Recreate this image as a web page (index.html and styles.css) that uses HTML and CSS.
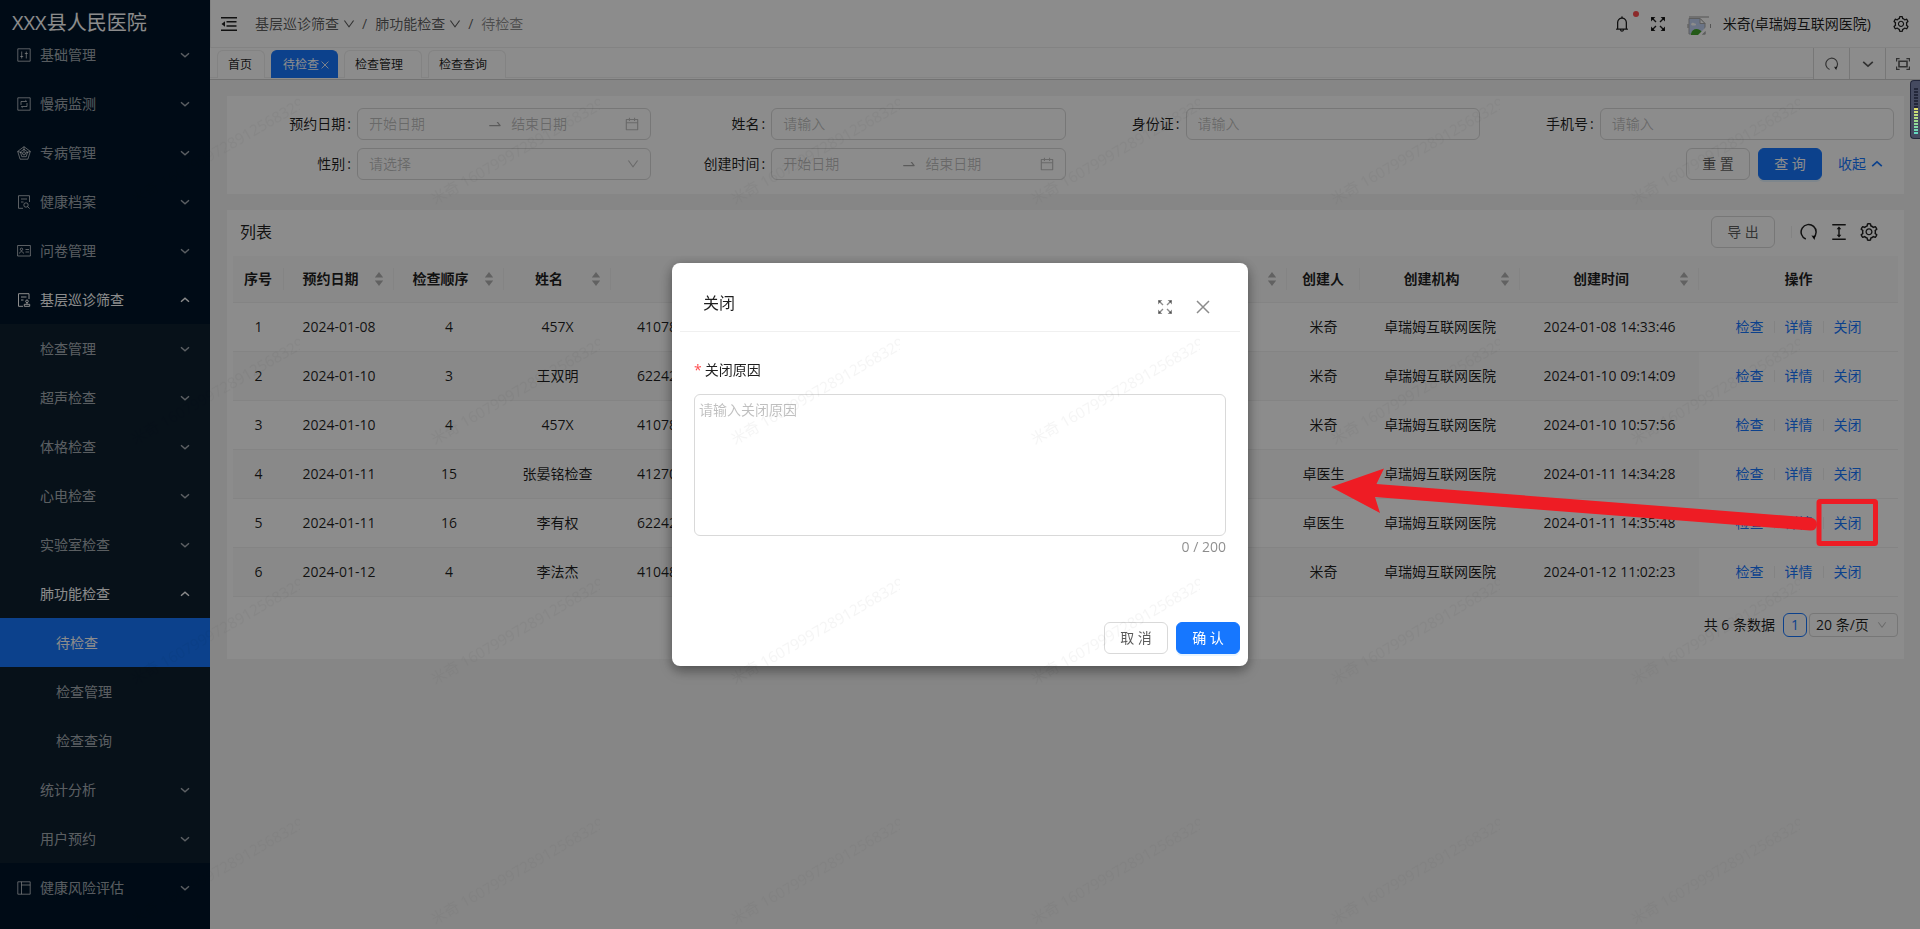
FILE: index.html
```html
<!DOCTYPE html>
<html lang="zh-CN">
<head>
<meta charset="utf-8">
<title>待检查</title>
<link rel="stylesheet" href="styles.css">
</head>
<body>
<svg class="sprite" aria-hidden="true">
  <symbol id="down" viewBox="64 64 896 896"><path d="M884 256h-75c-5.100 0-9.900 2.500-12.900 6.600L512 654.200 227.900 262.600c-3-4.100-7.800-6.600-12.900-6.600h-75c-6.500 0-10.300 7.400-6.500 12.700l352.600 486.100c12.800 17.600 39 17.600 51.700 0l352.600-486.100c3.900-5.300.1-12.700-6.400-12.700z"/></symbol>
  <symbol id="chev" viewBox="0 0 10 10"><path d="M1 3.200l4 3.600 4-3.600" fill="none" stroke="currentColor" stroke-width="1.400"/></symbol>
  <symbol id="cal" viewBox="64 64 896 896"><path d="M880 184H712v-64c0-4.400-3.600-8-8-8h-56c-4.400 0-8 3.600-8 8v64H384v-64c0-4.400-3.600-8-8-8h-56c-4.400 0-8 3.600-8 8v64H144c-17.700 0-32 14.300-32 32v664c0 17.700 14.300 32 32 32h736c17.700 0 32-14.300 32-32V216c0-17.700-14.300-32-32-32zm-40 656H184V460h656v380zM184 392V256h128v48c0 4.400 3.600 8 8 8h56c4.400 0 8-3.600 8-8v-48h256v48c0 4.400 3.600 8 8 8h56c4.400 0 8-3.600 8-8v-48h128v136H184z"/></symbol>
  <symbol id="to" viewBox="0 0 1024 1024"><path d="M873.100 596.200l-164-208A32 32 0 00684 376h-64.800c-6.700 0-10.400 7.700-6.300 13l144.300 183H152c-4.400 0-8 3.600-8 8v60c0 4.400 3.600 8 8 8h695.900c26.800 0 41.700-30.800 25.200-51.800z"/></symbol>
  <symbol id="bell" viewBox="64 64 896 896"><path d="M816 768h-24V428c0-141.100-104.300-257.800-240-277.200V112c0-22.100-17.900-40-40-40s-40 17.900-40 40v38.800C336.300 170.200 232 286.900 232 428v340h-24c-17.700 0-32 14.300-32 32v32c0 4.400 3.600 8 8 8h216c0 61.800 50.200 112 112 112s112-50.200 112-112h216c4.400 0 8-3.600 8-8v-32c0-17.700-14.300-32-32-32zM512 888c-26.500 0-48-21.500-48-48h96c0 26.500-21.500 48-48 48zM304 768V428c0-55.600 21.600-107.800 60.900-147.100S456.400 220 512 220c55.600 0 107.800 21.600 147.100 60.900S720 372.400 720 428v340H304z"/></symbol>
  <symbol id="gear" viewBox="64 64 896 896"><path d="M924.800 625.700l-65.500-56c3.100-19 4.700-38.400 4.700-57.800s-1.600-38.800-4.700-57.800l65.500-56a32.030 32.030 0 009.300-35.200l-.9-2.600a443.740 443.740 0 00-79.700-137.900l-1.800-2.100a32.120 32.120 0 00-35.100-9.500l-81.300 28.900c-30-24.600-63.500-44-99.700-57.600l-15.700-85a32.050 32.050 0 00-25.800-25.700l-2.700-.5c-52.100-9.400-106.900-9.400-159 0l-2.700.5a32.050 32.050 0 00-25.800 25.700l-15.800 85.400a351.860 351.860 0 00-99 57.400l-81.900-29.100a32 32 0 00-35.100 9.500l-1.800 2.100a446.020 446.020 0 00-79.700 137.900l-.9 2.600c-4.500 12.500-.8 26.500 9.300 35.200l66.300 56.600c-3.100 18.800-4.600 38-4.600 57.100 0 19.200 1.500 38.400 4.600 57.100L99 625.500a32.030 32.030 0 00-9.300 35.200l.9 2.600c18.100 50.400 44.900 96.900 79.700 137.900l1.800 2.100a32.120 32.120 0 0035.100 9.500l81.900-29.100c29.800 24.500 63.100 43.900 99 57.400l15.800 85.400a32.050 32.050 0 0025.800 25.700l2.700.5a449.400 449.400 0 00159 0l2.700-.5a32.050 32.050 0 0025.800-25.700l15.700-85a350 350 0 0099.700-57.600l81.300 28.900a32 32 0 0035.100-9.500l1.800-2.100c34.800-41.100 61.600-87.500 79.700-137.900l.9-2.600c4.500-12.300.8-26.300-9.300-35zM788.300 465.900c2.500 15.100 3.800 30.600 3.800 46.100s-1.300 31-3.800 46.100l-6.600 40.100 74.700 63.900a370.030 370.030 0 01-42.600 73.600L721 702.800l-31.400 25.800c-23.900 19.600-50.500 35-79.300 45.800l-38.100 14.300-17.900 97a377.500 377.500 0 01-85 0l-17.900-97.200-37.800-14.500c-28.500-10.800-55-26.200-78.700-45.700l-31.400-25.900-93.400 33.200c-17-22.900-31.200-47.600-42.600-73.600l75.500-64.500-6.500-40c-2.400-14.900-3.700-30.300-3.700-45.500 0-15.300 1.200-30.600 3.700-45.500l6.500-40-75.500-64.500c11.300-26.100 25.600-50.700 42.600-73.600l93.400 33.200 31.400-25.900c23.700-19.500 50.200-34.900 78.700-45.700l37.900-14.300 17.900-97.200c28.100-3.200 56.800-3.200 85 0l17.900 97 38.100 14.300c28.700 10.800 55.400 26.200 79.300 45.800l31.400 25.800 92.800-32.900c17 22.900 31.200 47.600 42.600 73.600L781.800 426l6.500 39.900zM512 326c-97.200 0-176 78.800-176 176s78.800 176 176 176 176-78.800 176-176-78.800-176-176-176zm79.200 255.200A111.600 111.600 0 01512 614c-29.900 0-58-11.700-79.200-32.800A111.600 111.600 0 01400 502c0-29.900 11.700-58 32.800-79.200C454 401.600 482.100 390 512 390c29.900 0 58 11.600 79.200 32.800A111.600 111.600 0 01624 502c0 29.900-11.700 58-32.800 79.200z"/></symbol>
  <symbol id="height" viewBox="64 64 896 896"><path d="M840 836H184c-4.400 0-8 3.600-8 8v60c0 4.400 3.600 8 8 8h656c4.400 0 8-3.600 8-8v-60c0-4.400-3.600-8-8-8zm0-724H184c-4.400 0-8 3.600-8 8v60c0 4.400 3.600 8 8 8h656c4.400 0 8-3.600 8-8v-60c0-4.400-3.600-8-8-8zM610.800 378c6 0 9.400-7 5.700-11.700L515.700 238.700a7.140 7.140 0 00-11.300 0L403.600 366.300a7.230 7.230 0 005.700 11.700H476v268h-62.800c-6 0-9.400 7-5.700 11.700l100.800 127.500c2.900 3.700 8.500 3.700 11.300 0l100.800-127.500c3.700-4.700.4-11.700-5.700-11.700H548V378h62.800z"/></symbol>
  <symbol id="redo" viewBox="0 0 18 18"><path d="M5.800 16A7.500 7.500 0 1 1 13.300 14.900" fill="none" stroke="currentColor" stroke-width="1.500"/><path d="M11.400 12.600l4 .3-.8 4.200z"/></symbol>
  <symbol id="full" viewBox="0 0 14 14"><g fill="none" stroke="currentColor" stroke-width="1.400"><path d="M1 1l4 4M13 1L9 5M1 13l4-4M13 13L9 9"/></g><path d="M0 0h4.400L0 4.400zM14 0v4.400L9.600 0zM0 14V9.600L4.400 14zM14 14H9.600L14 9.600z"/></symbol>
  <symbol id="fold" viewBox="0 0 16 14"><path d="M0 0h16v1.500H0zM5.500 4h10v1.500h-10zM5.500 8.300h10v1.500h-10zM0 12.500h16V14H0zM.5 7L4 4.300v5.400z"/></symbol>
  <symbol id="screen" viewBox="0 0 14 12"><g fill="none" stroke="currentColor" stroke-width="1.200"><path d="M.6 3.500V.6h3M10.400.6h3v2.900M13.400 8.500v2.900h-3M3.600 11.400h-3V8.500"/><path d="M3 3.300h8v5.400H3z" stroke-width="1.600"/></g></symbol>
  <symbol id="x" viewBox="0 0 14 14"><path d="M1 1l12 12M13 1L1 13" fill="none" stroke="currentColor" stroke-width="1.500"/></symbol>
  <symbol id="sort" viewBox="0 0 12 14"><path d="M6 0l4.200 5.500H1.800zM6 14l4.200-5.500H1.800z"/></symbol>
  <symbol id="m1" viewBox="0 0 14 14"><g class="line"><path d="M.8.800h12.400v12.400H.8zM4.700 3.500v7M9.300 3.500v7M3.200 8.500h3M7.800 5.500h3"/></g></symbol>
  <symbol id="m2" viewBox="0 0 14 14"><g class="line"><path d="M.8.800h12.400v12.400H.8zM4 8V4.500h5.500M10 6v3.500H4.500M8.300 3.200l1.500 1.300M5.700 10.800L4.200 9.500"/></g></symbol>
  <symbol id="m3" viewBox="0 0 14 14"><g class="line"><path d="M7 .7l6.300 4.700-2.400 7.800H3.100L.7 5.400zM7 3.200l3.600 2.800-1.400 4.700H4.800L3.400 6zM7 5.800l1.500 1.100-.6 1.900H6.100l-.6-1.900zM7 .7v5M.7 5.400L5.500 7M13.300 5.400L8.500 7"/></g></symbol>
  <symbol id="m4" viewBox="0 0 14 14"><g class="line"><path d="M6 13.300H1.500V.7h11V7M4 4h6M4 7h2.500"/><circle cx="9" cy="10" r="2.200"/><path d="M10.600 11.600l2 2"/></g></symbol>
  <symbol id="m5" viewBox="0 0 14 14"><g class="line"><path d="M.6 1.500h12.800v10.500H.6zM8.500 5.500H12M8.500 8H12M2.500 9.500c.3-2.500 3.700-2.500 4 0"/><circle cx="4.500" cy="5.300" r="1.200"/></g></symbol>
  <symbol id="m6" viewBox="0 0 14 14"><g class="line"><path d="M6 13.300H1.500V.7h10.500V6M4 4h5.500M4 7h2.500M7.300 13.300v-2h5.400v2zM10 11v-1.500"/><circle cx="10" cy="8.300" r="1.300"/></g></symbol>
  <symbol id="m7" viewBox="0 0 14 14"><g class="line"><path d="M.8.800h12.400v12.400H.8zM4.500.8v12.400M4.500 4h8.700"/></g></symbol>
</svg>

<div class="app">
  <aside class="side">
    <div class="logo">XXX县人民医院</div>
    <nav class="menu">
      <a href="#" class="item"><svg class="mi"><use href="#m1"/></svg><span>基础管理</span><svg class="arr"><use href="#chev"/></svg></a>
      <a href="#" class="item"><svg class="mi"><use href="#m2"/></svg><span>慢病监测</span><svg class="arr"><use href="#chev"/></svg></a>
      <a href="#" class="item"><svg class="mi"><use href="#m3"/></svg><span>专病管理</span><svg class="arr"><use href="#chev"/></svg></a>
      <a href="#" class="item"><svg class="mi"><use href="#m4"/></svg><span>健康档案</span><svg class="arr"><use href="#chev"/></svg></a>
      <a href="#" class="item"><svg class="mi"><use href="#m5"/></svg><span>问卷管理</span><svg class="arr"><use href="#chev"/></svg></a>
      <a href="#" class="item open"><svg class="mi"><use href="#m6"/></svg><span>基层巡诊筛查</span><svg class="arr"><use href="#chev"/></svg></a>
      <div class="sub">
        <a href="#" class="item"><span>检查管理</span><svg class="arr"><use href="#chev"/></svg></a>
        <a href="#" class="item"><span>超声检查</span><svg class="arr"><use href="#chev"/></svg></a>
        <a href="#" class="item"><span>体格检查</span><svg class="arr"><use href="#chev"/></svg></a>
        <a href="#" class="item"><span>心电检查</span><svg class="arr"><use href="#chev"/></svg></a>
        <a href="#" class="item"><span>实验室检查</span><svg class="arr"><use href="#chev"/></svg></a>
        <a href="#" class="item open"><span>肺功能检查</span><svg class="arr"><use href="#chev"/></svg></a>
        <a href="#" class="item leaf active"><span>待检查</span></a>
        <a href="#" class="item leaf"><span>检查管理</span></a>
        <a href="#" class="item leaf"><span>检查查询</span></a>
        <a href="#" class="item"><span>统计分析</span><svg class="arr"><use href="#chev"/></svg></a>
        <a href="#" class="item"><span>用户预约</span><svg class="arr"><use href="#chev"/></svg></a>
      </div>
      <a href="#" class="item"><svg class="mi"><use href="#m7"/></svg><span>健康风险评估</span><svg class="arr"><use href="#chev"/></svg></a>
    </nav>
  </aside>

  <div class="main">
    <header class="top">
      <svg class="fold"><use href="#fold"/></svg>
      <nav class="crumbs">
        <a href="#">基层巡诊筛查<svg class="i12"><use href="#down"/></svg></a><span class="slash">/</span>
        <a href="#">肺功能检查<svg class="i12"><use href="#down"/></svg></a><span class="slash">/</span>
        <span class="here">待检查</span>
      </nav>
      <div class="tools">
        <span class="bell"><svg class="i16"><use href="#bell"/></svg><i class="dot"></i></span>
        <svg class="i14"><use href="#full"/></svg>
        <svg class="avatar" viewBox="0 -4 24 24"><path d="M1 12V8M2 1h20M23.500 8v4" fill="none" stroke="#999"/><path d="M2 2.500h11l5 5V18H2z" fill="#c3d3f5" stroke="#aaa"/><path d="M13 2.500v5h5z" fill="#fff" stroke="#aaa"/><path d="M4 8.500c0-2 3-2.500 3.500-1 2-.5 2 2 .5 2H5z" fill="#fff"/><path d="M4 18c1-6 8-7 12-1l-1 2H4z" fill="#43a52c"/><path d="M10 20l9-9v4l-5 5z" fill="#fff"/><path d="M15 18.500h3.500v-3.500z" fill="#aaa"/></svg>
        <span>米奇(卓瑞姆互联网医院)</span>
        <svg class="i16 set"><use href="#gear"/></svg>
      </div>
    </header>

    <div class="tabs">
      <div class="tablist">
        <a href="#" class="tab">首页</a>
        <a href="#" class="tab closable on">待检查<svg class="i8"><use href="#x"/></svg></a>
        <a href="#" class="tab closable">检查管理</a>
        <a href="#" class="tab closable">检查查询</a>
      </div>
      <button class="tb" aria-label="刷新"><svg class="i14"><use href="#redo"/></svg></button>
      <button class="tb" aria-label="更多"><svg class="i12"><use href="#chev"/></svg></button>
      <button class="tb" aria-label="全屏"><svg class="i14"><use href="#screen"/></svg></button>
    </div>

    <main class="content">
      <form class="card search">
        <div class="field"><label for="d1">预约日期<i>:</i></label><div class="box"><input id="d1" placeholder="开始日期"><svg class="i16 to"><use href="#to"/></svg><input aria-label="结束日期" placeholder="结束日期"><svg class="i14 cal"><use href="#cal"/></svg></div></div>
        <div class="field"><label for="nm">姓名<i>:</i></label><div class="box"><input id="nm" placeholder="请输入"></div></div>
        <div class="field"><label for="idn">身份证<i>:</i></label><div class="box"><input id="idn" placeholder="请输入"></div></div>
        <div class="field"><label for="ph">手机号<i>:</i></label><div class="box"><input id="ph" placeholder="请输入"></div></div>
        <div class="field"><label for="sx">性别<i>:</i></label><div class="box"><select id="sx" class="ghost"><option>请选择</option></select><svg class="i12 cal"><use href="#down"/></svg></div></div>
        <div class="field"><label for="d2">创建时间<i>:</i></label><div class="box"><input id="d2" placeholder="开始日期"><svg class="i16 to"><use href="#to"/></svg><input aria-label="结束日期" placeholder="结束日期"><svg class="i14 cal"><use href="#cal"/></svg></div></div>
        <div class="acts"><button type="button" class="btn">重 置</button><button type="button" class="btn pri">查 询</button><a href="#" class="fewer">收起<svg class="i12 up"><use href="#chev"/></svg></a></div>
      </form>

      <section class="card list">
        <div class="bar">
          <h2>列表</h2>
          <button class="btn">导 出</button><i class="vr"></i>
          <svg class="i18"><use href="#redo"/></svg><svg class="i18"><use href="#height"/></svg><svg class="i18"><use href="#gear"/></svg>
        </div>
        <table>
          <colgroup><col class="w51"><col class="w110"><col class="w110"><col class="w107"><col><col class="w73"><col class="w160"><col class="w179"><col class="w199"></colgroup>
          <thead><tr>
            <th><div><span>序号</span></div></th>
            <th><div><span>预约日期</span><svg><use href="#sort"/></svg></div></th>
            <th><div><span>检查顺序</span><svg><use href="#sort"/></svg></div></th>
            <th><div><span>姓名</span><svg><use href="#sort"/></svg></div></th>
            <th><div class="tip"><i></i><svg><use href="#sort"/></svg></div></th>
            <th><div><span>创建人</span></div></th>
            <th><div><span>创建机构</span><svg><use href="#sort"/></svg></div></th>
            <th><div><span>创建时间</span><svg><use href="#sort"/></svg></div></th>
            <th><div><span>操作</span></div></th>
          </tr></thead>
          <tbody>
            <tr><td>1</td><td>2024-01-08</td><td>4</td><td>457X</td><td class="id">41078</td><td>米奇</td><td>卓瑞姆互联网医院</td><td>2024-01-08 14:33:46</td><td class="ops"><a href="#">检查</a><a href="#">详情</a><a href="#">关闭</a></td></tr>
            <tr><td>2</td><td>2024-01-10</td><td>3</td><td>王双明</td><td class="id">62242</td><td>米奇</td><td>卓瑞姆互联网医院</td><td>2024-01-10 09:14:09</td><td class="ops"><a href="#">检查</a><a href="#">详情</a><a href="#">关闭</a></td></tr>
            <tr><td>3</td><td>2024-01-10</td><td>4</td><td>457X</td><td class="id">41078</td><td>米奇</td><td>卓瑞姆互联网医院</td><td>2024-01-10 10:57:56</td><td class="ops"><a href="#">检查</a><a href="#">详情</a><a href="#">关闭</a></td></tr>
            <tr><td>4</td><td>2024-01-11</td><td>15</td><td>张晏铭检查</td><td class="id">41270</td><td>卓医生</td><td>卓瑞姆互联网医院</td><td>2024-01-11 14:34:28</td><td class="ops"><a href="#">检查</a><a href="#">详情</a><a href="#">关闭</a></td></tr>
            <tr><td>5</td><td>2024-01-11</td><td>16</td><td>李有权</td><td class="id">62242</td><td>卓医生</td><td>卓瑞姆互联网医院</td><td>2024-01-11 14:35:48</td><td class="ops"><a href="#">检查</a><a href="#">详情</a><a href="#">关闭</a></td></tr>
            <tr><td>6</td><td>2024-01-12</td><td>4</td><td>李法杰</td><td class="id">41048</td><td>米奇</td><td>卓瑞姆互联网医院</td><td>2024-01-12 11:02:23</td><td class="ops"><a href="#">检查</a><a href="#">详情</a><a href="#">关闭</a></td></tr>
          </tbody>
        </table>
        <div class="pager"><span>共 6 条数据</span><button class="page">1</button><div class="size"><select aria-label="每页条数"><option>20 条/页</option></select><svg class="i10"><use href="#down"/></svg></div></div>
      </section>
    </main>
  </div>
</div>

<div class="mask">
  <div class="modal" role="dialog" aria-labelledby="mt">
    <div class="mhead"><h3 id="mt">关闭</h3><button aria-label="全屏"><svg class="i14"><use href="#full"/></svg></button><button aria-label="关闭"><svg class="i14"><use href="#x"/></svg></button></div>
    <div class="mbody">
      <label for="why"><b>*</b>关闭原因</label>
      <textarea id="why" placeholder="请输入关闭原因"></textarea>
      <div class="count">0 / 200</div>
    </div>
    <div class="mfoot"><button class="btn">取 消</button><button class="btn pri">确 认</button></div>
  </div>
</div>

<svg class="wm" aria-hidden="true">
  <defs><pattern id="wmp" x="0" y="96" width="300" height="240" patternUnits="userSpaceOnUse"><text transform="translate(135 109) rotate(-30)">米奇 1607999728912568329</text></pattern></defs>
  <rect width="100%" height="100%" fill="url(#wmp)"/>
</svg>

<svg class="note" viewBox="0 0 600 100" aria-hidden="true">
  <path d="M11 27L64 8.500 56.500 24 490 57.500Q497 58 497 65 496 71 490 70.500L55 37 60 53z" fill="#ee1c24"/>
  <rect x="499" y="41.500" width="56.500" height="42" rx="1" fill="none" stroke="#ee1c24" stroke-width="5"/>
</svg>
<div class="meter"><i class="off"></i><i class="lit"></i></div>
</body>
</html>
```
FILE: styles.css
```css
* { box-sizing: border-box; }
body { margin: 0; font: 14px/22px "Open Sans", "Noto Sans CJK SC", sans-serif; color: rgba(0,0,0,.88); overflow: hidden; }
a { color: inherit; text-decoration: none; }
svg { fill: currentColor; flex: none; display: block; }
button, input, select, textarea { font: inherit; color: inherit; }
h2, h3 { margin: 0; font-weight: 400; font-size: 16px; line-height: 24px; }
.sprite { position: absolute; width: 0; height: 0; }
.line { fill: none; stroke: currentColor; stroke-width: 1; }
.i8 { width: 8px; height: 8px; }
.i10 { width: 10px; height: 10px; }
.i12 { width: 12px; height: 12px; }
.i14 { width: 14px; height: 14px; }
.i16 { width: 16px; height: 16px; }
.i18 { width: 18px; height: 18px; }

.app { display: flex; height: 100vh; }

.side { width: 210px; flex: none; background: #001529; color: #fff; overflow: hidden; }
.logo { height: 46px; padding-left: 12px; font-size: 20px; line-height: 46px; }
.menu { margin-top: -16px; }
.item { display: flex; align-items: center; height: 49px; padding: 0 20px 0 17px; color: rgba(255,255,255,.65); }
.item span { flex: 1; }
.item .mi { width: 14px; height: 14px; margin-right: 9px; }
.item .arr { width: 10px; height: 10px; }
.item.open { color: #fff; }
.item.open .arr, .up { transform: rotate(180deg); }
.sub { background: #0d1f2f; }
.sub .item { padding-left: 40px; }
.sub .leaf { padding-left: 56px; }
.item.active { background: #1677ff; color: #fff; }

.main { flex: 1; min-width: 0; display: flex; flex-direction: column; background: #f5f5f5; }
.top { display: flex; align-items: center; height: 48px; padding: 0 11px 0 10px; background: #fff; border-bottom: 1px solid #eee; border-left: 1px solid #eee; }
.fold { width: 16px; height: 14px; margin-right: 18px; }
.crumbs { flex: 1; display: flex; align-items: center; color: rgba(0,0,0,.65); }
.crumbs a { display: flex; align-items: center; gap: 4px; }
.slash { margin: 0 8px 0 7px; }
.here { color: rgba(0,0,0,.45); }
.tools { display: flex; align-items: center; }
.bell { position: relative; margin-right: 21px; }
.dot { position: absolute; right: -9px; top: -5px; width: 6px; height: 6px; border-radius: 3px; background: #ff4d4f; }
.avatar { width: 24px; height: 24px; margin: 0 12px 0 22px; }
.set { margin-left: 22px; }

.tabs { display: flex; height: 32px; background: #fff; border-bottom: 1px solid #d0d0d0; }
.tablist { flex: 1; display: flex; gap: 6px; padding: 2px 0 0 7px; height: 30px; border-bottom: 1px solid #f0f0f0; }
.tab { display: flex; align-items: center; height: 28px; padding: 0 12px 0 10px; font-size: 12px; border: 1px solid #eee; border-bottom: 0; border-radius: 6px 6px 0 0; background: #fff; }
.closable { padding-right: 18px; }
.on { padding: 0 8px 0 11px; gap: 2px; background: #1677ff; color: #fff; border-color: #1677ff; }
.tb { width: 36px; display: grid; place-items: center; padding: 0; border: 0; border-left: 1px solid #d9d9d9; background: none; color: rgba(0,0,0,.65); }
.tb:last-child { width: 35px; }

.content { padding: 16px; }
.card { background: #fff; }
.search { display: grid; grid-template-columns: repeat(4, 1fr); row-gap: 8px; padding: 12px 10px 14px; margin-bottom: 16px; margin-left: 1px; }
.field { display: flex; align-items: center; }
.field label { width: 120px; flex: none; text-align: right; }
.field label i { font-style: normal; margin: 0 6px 0 2px; }
.box { flex: 1; min-width: 0; display: flex; align-items: center; height: 32px; padding: 0 11px; border: 1px solid #d9d9d9; border-radius: 6px; }
.box input, .box select { flex: 1; min-width: 0; width: 0; padding: 0; border: 0; outline: 0; background: none; appearance: none; }
::placeholder { color: rgba(0,0,0,.25); opacity: 1; }
.ghost, .box .cal, .box .to { color: rgba(0,0,0,.25); }
.box .to { margin: 0 8px; color: rgba(0,0,0,.35); }
.box .cal { margin-left: 4px; }
.acts { grid-column: 3 / 5; display: flex; justify-content: flex-end; align-items: center; gap: 8px; }
.btn { min-width: 64px; height: 32px; padding: 0 15px; border: 1px solid #d9d9d9; border-radius: 6px; background: #fff; color: rgba(0,0,0,.65); }
.pri { background: #1677ff; border-color: #1677ff; color: #fff; box-shadow: 0 2px 0 rgba(5,145,255,.1); }
.fewer { display: flex; align-items: center; gap: 5px; padding: 0 11px 0 8px; color: #1677ff; }

.list { margin-left: 1px; padding: 6px 6px 22px; }
.bar { display: flex; align-items: center; height: 40px; padding: 0 20px 8px 7px; }
.bar h2 { flex: 1; }
.bar .i18 { margin-left: 12px; }
.vr { width: 1px; height: 12px; margin: 0 -4px 0 16px; background: #eee; }
table { width: 100%; table-layout: fixed; border-collapse: separate; border-spacing: 0; }
.w51 { width: 51px; } .w73 { width: 73px; } .w107 { width: 107px; } .w110 { width: 110px; }
.w160 { width: 160px; } .w179 { width: 179px; } .w199 { width: 199px; }
th, td { padding: 0; text-align: center; border-bottom: 1px solid #f0f0f0; }
th { height: 47px; background: #fafafa; font-weight: 600; }
th div { display: flex; align-items: center; height: 22px; padding: 0 8px; border-right: 1px solid #f0f0f0; }
th:last-child div { border: 0; }
th span { flex: 1; }
th svg { width: 12px; height: 14px; margin-left: 4px; color: rgba(0,0,0,.29); }
.tip { justify-content: flex-end; }
.tip i { width: 14px; height: 14px; margin-right: 14px; border-radius: 7px; background: #1890ff; }
td { height: 49px; }
tr:nth-child(even) td { background: #fafafa; }
tr:nth-child(even) .ops { background: #fff; }
td.id { text-align: left; padding-left: 26px; }
.ops a { color: #1677ff; padding: 0 10px; }
.ops a + a { padding-left: 11px; background: linear-gradient(#eee, #eee) left center / 1px 12px no-repeat; }
.pager { display: flex; justify-content: flex-end; align-items: center; margin-top: 16px; line-height: 24px; }
.page { width: 24px; height: 24px; padding: 0; margin: 0 2px 0 8px; border: 1px solid #1677ff; border-radius: 6px; background: #fff; color: #1677ff; line-height: 20px; }
.size { width: 89px; height: 24px; display: flex; align-items: center; padding: 0 10px 0 6px; border: 1px solid #d9d9d9; border-radius: 4px; }
.size select { flex: 1; min-width: 0; padding: 0; border: 0; background: none; appearance: none; }
.size svg { color: rgba(0,0,0,.25); }

.mask { position: fixed; inset: 0; display: flex; justify-content: center; align-items: center; background: rgba(0,0,0,.45); }
.modal { width: 30%; padding: 20px 8px 12px; border-radius: 8px; background: #fff; box-shadow: 0 6px 16px rgba(0,0,0,.2), 0 3px 12px rgba(0,0,0,.3); }
.mhead { display: flex; align-items: center; gap: 24px; height: 49px; padding: 0 30px 8px 23px; border-bottom: 1px solid #f0f0f0; }
.mhead h3 { flex: 1; }
.mhead button { padding: 7px 0 0; border: 0; background: none; color: rgba(0,0,0,.45); }
.mbody { padding: 26px 14px 0; }
.mbody label { display: block; line-height: 24px; }
.mbody b { margin-right: 3px; font-weight: 400; color: #ff4d4f; }
.mbody textarea { display: block; width: 100%; height: 142px; margin-top: 12px; padding: 4px; border: 1px solid #d9d9d9; border-radius: 6px; resize: none; background: #fff; }
.count { text-align: right; color: rgba(0,0,0,.45); }
.mfoot { display: flex; justify-content: flex-end; gap: 8px; padding-top: 64px; }

.wm { position: fixed; inset: 0; width: 100%; height: 100%; pointer-events: none; }
.wm text { font-size: 15px; fill: rgba(0,0,0,.04); }
.note { position: fixed; right: 0; top: 460px; width: 600px; height: 100px; pointer-events: none; }
.meter { position: fixed; right: 0; top: 80px; width: 10px; height: 59px; padding: 7px 2px 0 3px; border: 1px solid #22263a; border-right: 0; border-radius: 4px 0 0 4px; background: #454a60; }
.meter i { display: block; }
.off { height: 20px; background: repeating-linear-gradient(#23273a 0 2px, transparent 2px 3px); }
.lit { height: 26px; background: repeating-linear-gradient(transparent 0 2px, #454a60 2px 3px), linear-gradient(#e3dd6a, #9fdc8c, #5fd9c6); }
```
